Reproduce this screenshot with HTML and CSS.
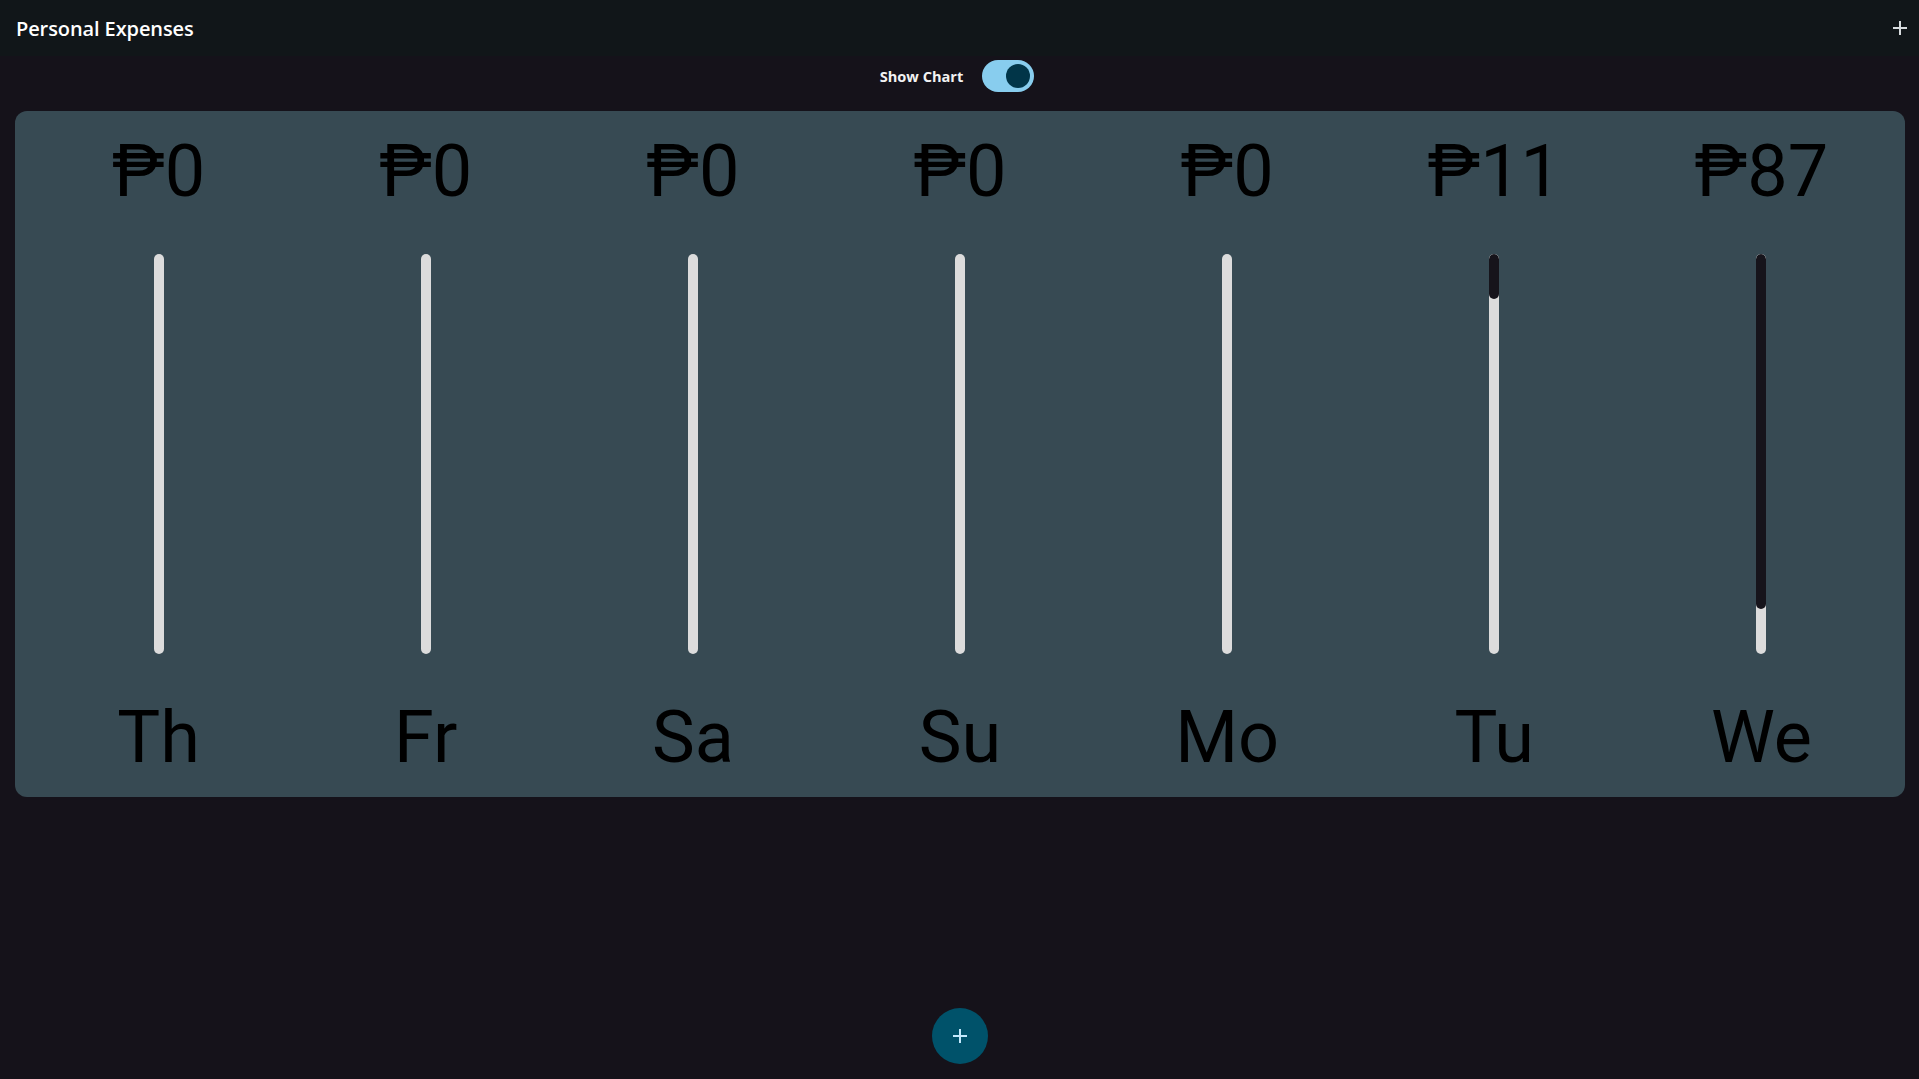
FILE: index.html
```html
<!DOCTYPE html>
<html>
<head>
<meta charset="utf-8">
<link rel="stylesheet" href="styles.css">
</head>
<body>
<header class="appbar">
  <h1 class="title">Personal Expenses</h1>
  <button class="icon-btn" aria-label="Add">
    <svg width="14" height="14" viewBox="0 0 14 14"><path d="M7 0v14M0 7h14" stroke="#d7dbde" stroke-width="2"/></svg>
  </button>
</header>
<main class="content">
  <div class="toggle-row">
    <span class="toggle-label">Show Chart</span>
    <span class="switch"><span class="thumb"></span></span>
  </div>
  <section class="card">
    <div class="col"><div class="amount">₱0</div><div class="bar"><div class="fill" style="height:0%"></div></div><div class="day">Th</div></div>
    <div class="col"><div class="amount">₱0</div><div class="bar"><div class="fill" style="height:0%"></div></div><div class="day">Fr</div></div>
    <div class="col"><div class="amount">₱0</div><div class="bar"><div class="fill" style="height:0%"></div></div><div class="day">Sa</div></div>
    <div class="col"><div class="amount">₱0</div><div class="bar"><div class="fill" style="height:0%"></div></div><div class="day">Su</div></div>
    <div class="col"><div class="amount">₱0</div><div class="bar"><div class="fill" style="height:0%"></div></div><div class="day">Mo</div></div>
    <div class="col"><div class="amount">₱11</div><div class="bar"><div class="fill" style="height:11.2%"></div></div><div class="day">Tu</div></div>
    <div class="col"><div class="amount">₱87</div><div class="bar"><div class="fill" style="height:88.8%"></div></div><div class="day">We</div></div>
  </section>
</main>
<button class="fab" aria-label="Add expense">
  <svg width="14" height="14" viewBox="0 0 14 14"><path d="M7 0v14M0 7h14" stroke="#c4e8fb" stroke-width="2"/></svg>
</button>
</body>
</html>
```
FILE: styles.css
```css
* { box-sizing: border-box; }
html, body { margin: 0; padding: 0; }
body {
  background: #15121a;
  width: 1919px;
  height: 1079px;
  overflow: hidden;
  font-family: Roboto, "Liberation Sans", sans-serif;
  position: relative;
}
.appbar {
  height: 56px;
  background: #111619;
  display: flex;
  align-items: center;
  justify-content: space-between;
  padding: 0 7px 0 16px;
}
.title {
  margin: 0;
  color: #ffffff;
  font-family: "Open Sans", sans-serif;
  font-weight: 600;
  font-size: 20px;
  letter-spacing: -0.1px;
}
.icon-btn {
  background: none;
  border: 0;
  padding: 0;
  width: 24px;
  height: 24px;
  display: flex;
  align-items: center;
  justify-content: center;
}
.content { padding: 0; }
.toggle-row {
  height: 40px;
  display: flex;
  align-items: center;
  justify-content: center;
  gap: 19px;
  padding-right: 5px;
}
.toggle-label {
  color: #f2f2f2;
  font-family: "Open Sans", sans-serif;
  font-weight: 700;
  font-size: 14.6px;
  margin-top: -1px;
}
.switch {
  width: 52px;
  height: 32px;
  border-radius: 16px;
  background: #88cdee;
  display: flex;
  align-items: center;
  justify-content: flex-end;
  padding-right: 4px;
}
.thumb {
  width: 24px;
  height: 24px;
  border-radius: 50%;
  background: #013548;
}
.card {
  margin: 15px 14px 0 15px;
  height: 686px;
  background: #374a53;
  border-radius: 12px;
  padding: 16px 10px;
  display: grid;
  grid-template-columns: repeat(7, 1fr);
}
.col {
  display: flex;
  flex-direction: column;
  align-items: center;
}
.amount, .day {
  font-size: 72px;
  line-height: 88px;
  height: 88px;
  color: #000;
  font-weight: 400;
  padding-top: 1px;
}
.bar {
  margin: 39px 0;
  width: 10px;
  height: 400px;
  border-radius: 5px;
  background: #dcdcdc;
  overflow: hidden;
  position: relative;
}
.fill {
  background: #16141b;
  border-radius: 5px;
  width: 100%;
}
.fab {
  position: absolute;
  left: 932px;
  top: 1008px;
  width: 56px;
  height: 56px;
  border-radius: 50%;
  border: 0;
  background: #00526a;
  display: flex;
  align-items: center;
  justify-content: center;
  padding: 0;
}
```
